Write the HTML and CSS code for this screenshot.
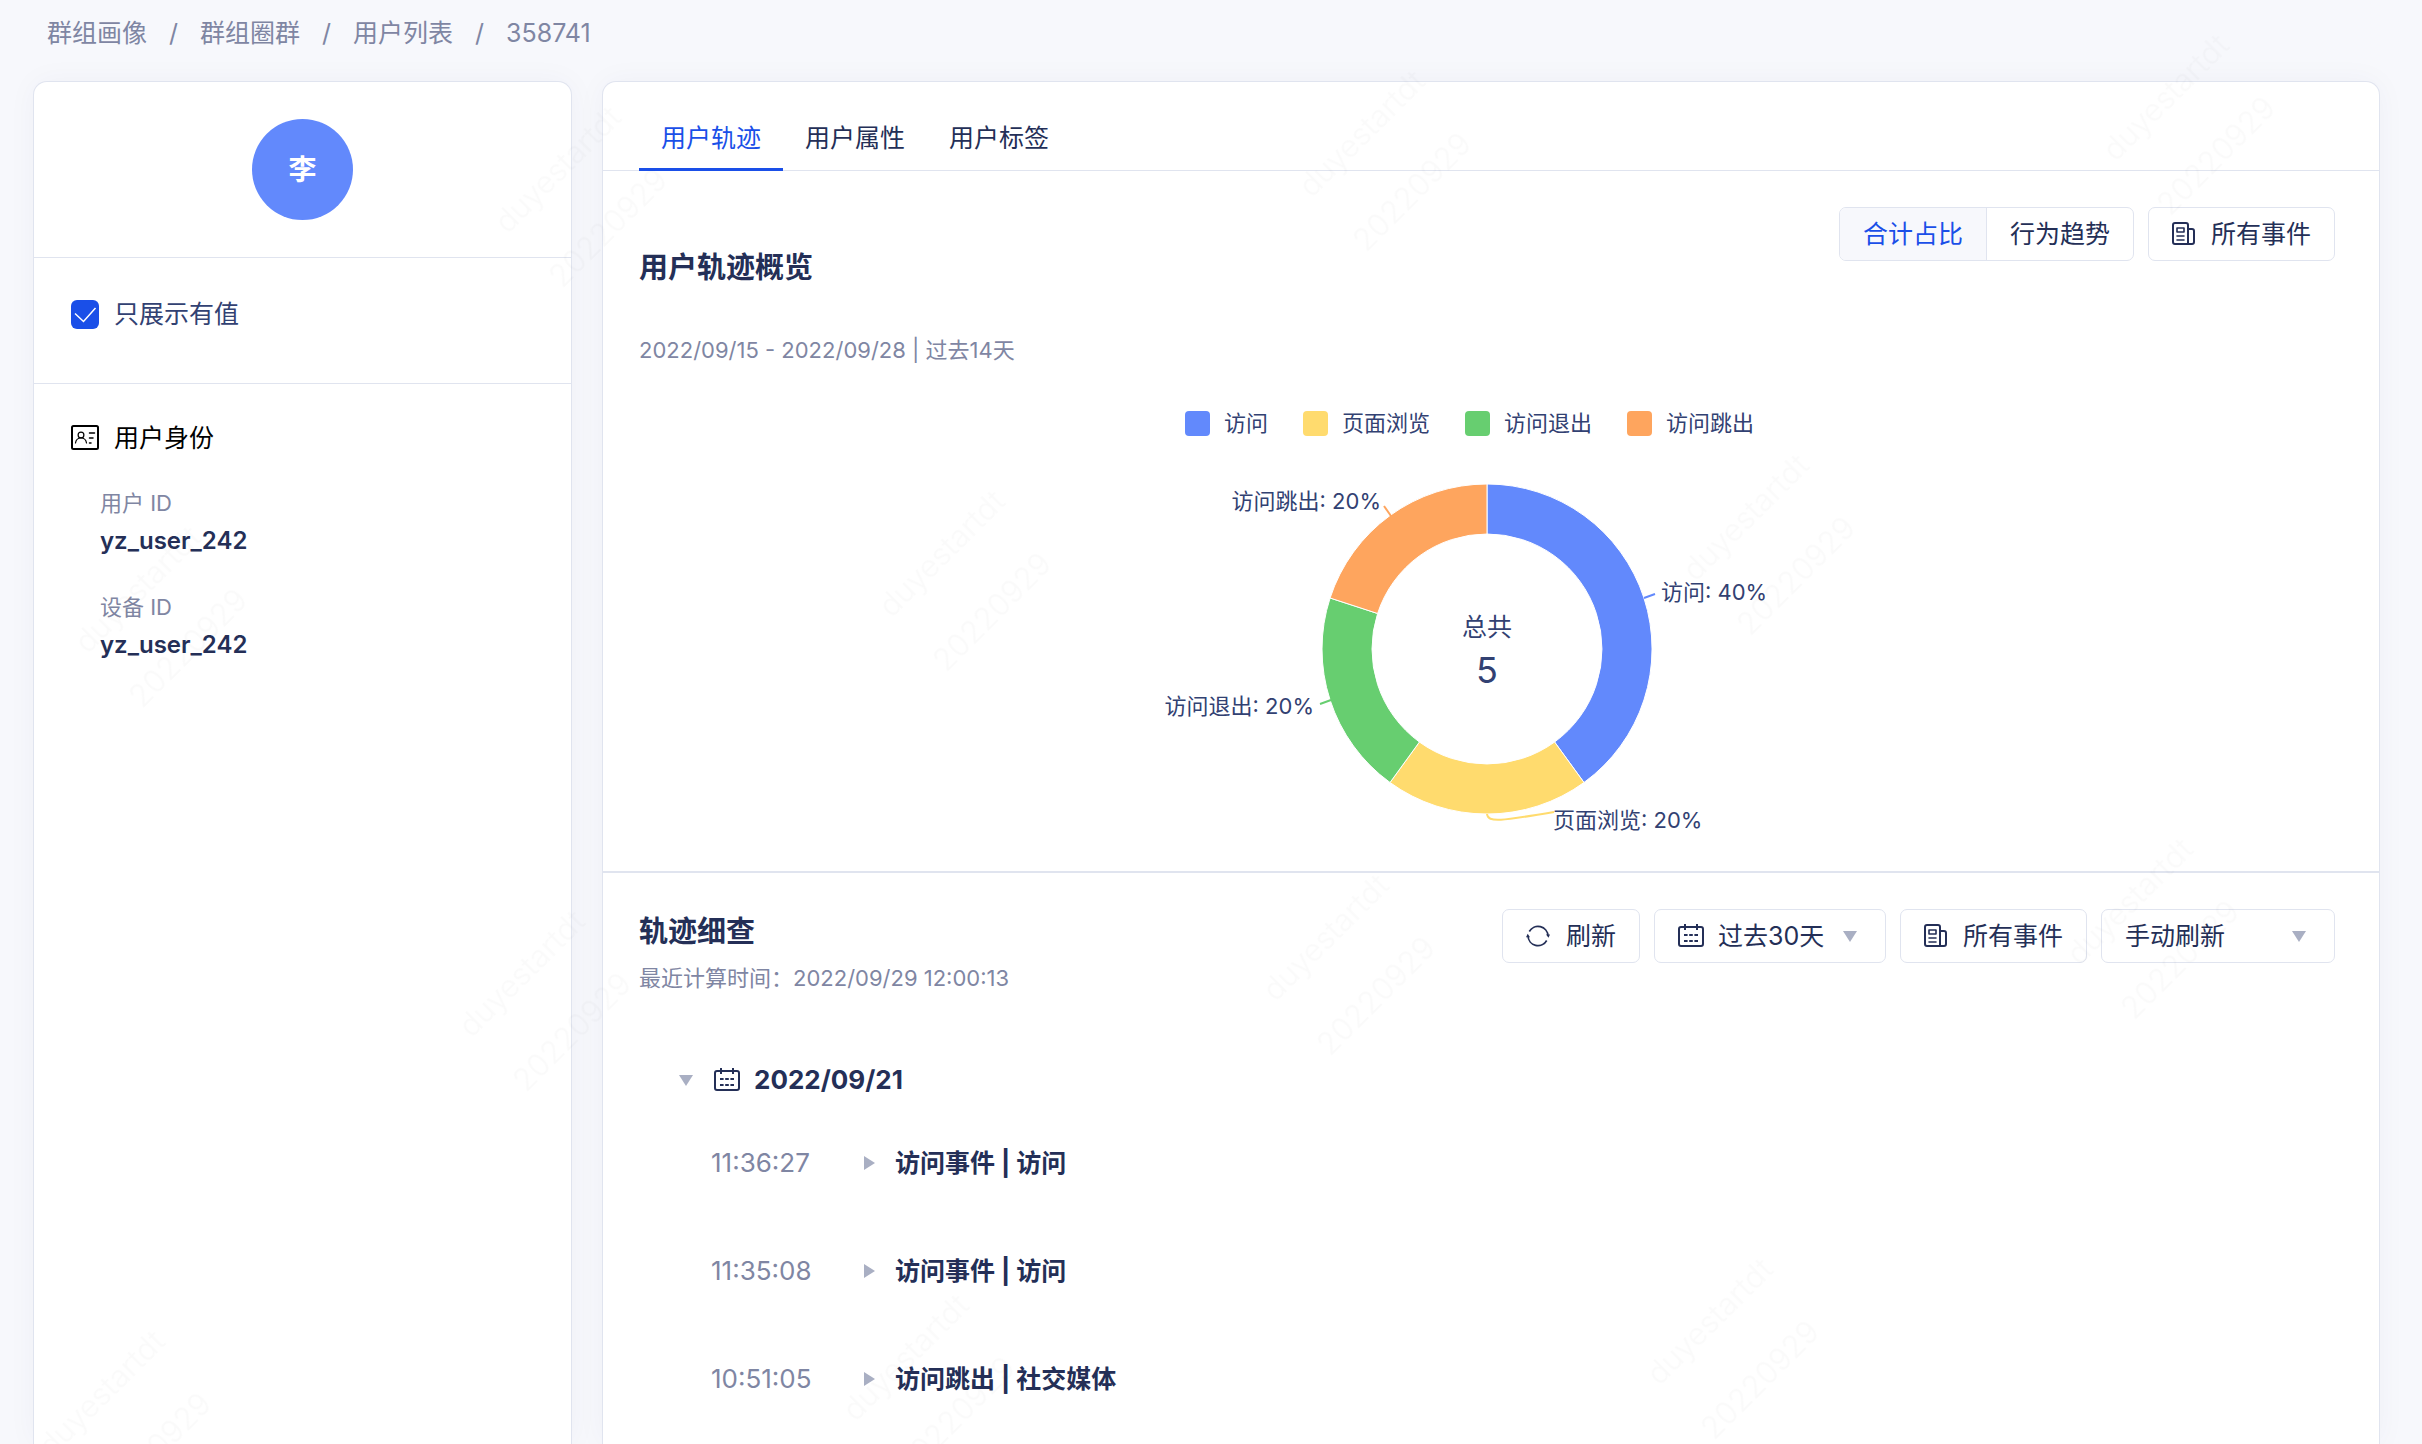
FILE: index.html
```html
<!DOCTYPE html>
<html lang="zh-CN">
<head>
<meta charset="utf-8">
<meta name="viewport" content="width=device-width, initial-scale=1">
<title>用户列表 - 358741</title>
<link rel="stylesheet" href="styles.css">
</head>
<body>
<svg class="sprite" aria-hidden="true">
  <symbol id="icon-doc" viewBox="0 0 23 24">
    <g fill="none" stroke="currentColor" stroke-width="2" stroke-linejoin="round" stroke-linecap="round">
      <path d="M16 22H3a2 2 0 0 1-2-2V3a2 2 0 0 1 2-2h11a2 2 0 0 1 2 2v19"/>
      <path d="M16 7h4a2 2 0 0 1 2 2v11a2 2 0 0 1-2 2h-4"/>
      <path d="M5 6h7v4H5zM5 14h7M5 18h7" stroke-width="1.6"/>
    </g>
  </symbol>
  <symbol id="icon-calendar" viewBox="0 0 26 24">
    <g fill="none" stroke="currentColor" stroke-width="2">
      <rect x="1" y="3" width="24" height="19" rx="2"/>
      <path d="M7 0v6M19 0v6"/>
      <path d="M6 11h3.600M11.200 11h3.600M16.400 11H20M6 17h3.600M11.200 17h3.600M16.400 17H20"/>
    </g>
  </symbol>
  <symbol id="icon-refresh" viewBox="0 0 24 24">
    <g fill="none" stroke="currentColor" stroke-width="1.700">
      <path d="M3.300 7.500A10 10 0 0 1 22 12"/>
      <path d="M20.700 16.500A10 10 0 0 1 2 12"/>
    </g>
    <path fill="currentColor" d="M20 10.500h4L22.500 13.800zM0 13.300h4L1.700 9.800z"/>
  </symbol>
  <symbol id="icon-idcard" viewBox="0 0 28 26">
    <g fill="none" stroke="currentColor" stroke-linecap="round">
      <rect x="1" y="1" width="26" height="23" rx="1.500" stroke-width="2"/>
      <circle cx="10" cy="10" r="2.900" stroke-width="1.200"/>
      <path d="M4.500 18c.5-3.500 2.500-5 5.500-5s5 1.500 5.500 5" stroke-width="1.200"/>
      <path d="M18.500 8h5M18.500 13h3.500M18.500 18h1.500" stroke-width="1.500"/>
    </g>
  </symbol>
  <symbol id="icon-down" viewBox="0 0 14 12"><path fill="currentColor" d="M0 1h14L7 12z"/></symbol>
  <symbol id="icon-right" viewBox="0 0 12 14"><path fill="currentColor" d="M1 0l11 7-11 7z"/></symbol>
</svg>

<div class="page">
  <nav class="breadcrumb" aria-label="面包屑">
    <a href="#">群组画像</a><span class="slash">/</span>
    <a href="#">群组圈群</a><span class="slash">/</span>
    <a href="#">用户列表</a><span class="slash">/</span>
    <span>358741</span>
  </nav>

  <main class="columns">
    <aside class="card profile">
      <div class="profile-head"><div class="avatar">李</div></div>
      <div class="profile-filter">
        <label class="check"><input type="checkbox" checked><span>只展示有值</span></label>
      </div>
      <section class="identity">
        <h2 class="identity-title"><svg class="i-idcard"><use href="#icon-idcard"/></svg>用户身份</h2>
        <dl class="fields">
          <div><dt>用户 ID</dt><dd>yz_user_242</dd></div>
          <div><dt>设备 ID</dt><dd>yz_user_242</dd></div>
        </dl>
      </section>
    </aside>

    <div class="card content">
      <div class="tabs" role="tablist">
        <button class="tab active" role="tab" aria-selected="true">用户轨迹</button>
        <button class="tab" role="tab" aria-selected="false">用户属性</button>
        <button class="tab" role="tab" aria-selected="false">用户标签</button>
      </div>

      <section class="overview">
        <div class="section-head">
          <h2 class="title overview-title">用户轨迹概览</h2>
          <div class="tools">
            <div class="segmented">
              <button class="active">合计占比</button>
              <button>行为趋势</button>
            </div>
            <button class="btn"><svg class="i-doc"><use href="#icon-doc"/></svg>所有事件</button>
          </div>
        </div>
        <p class="note range">2022/09/15 - 2022/09/28 | 过去14天</p>
        <ul class="legend">
          <li class="visit">访问</li>
          <li class="view">页面浏览</li>
          <li class="exit">访问退出</li>
          <li class="bounce">访问跳出</li>
        </ul>
        <svg class="donut" viewBox="-31 0 700 392" role="img" aria-label="用户轨迹占比">
          <g stroke="#fff" stroke-width="1">
            <path fill="#6289fc" d="M319 24A165 165 0 0 1 416 322.500L386.600 282A115 115 0 0 0 319 74z"/>
            <path fill="#ffdb6e" d="M416 322.500A165 165 0 0 1 222 322.500L251.400 282A115 115 0 0 0 386.600 282z"/>
            <path fill="#67ce70" d="M222 322.500A165 165 0 0 1 162.100 138L209.600 153.500A115 115 0 0 0 251.400 282z"/>
            <path fill="#fea55e" d="M162.100 138A165 165 0 0 1 319 24V74A115 115 0 0 0 209.600 153.500z"/>
          </g>
          <g fill="none" stroke-width="2">
            <path stroke="#6289fc" d="M476 138l11-4"/>
            <path stroke="#ffdb6e" d="M319 354c1 9 14 7 67-2"/>
            <path stroke="#67ce70" d="M163 240l-11 4"/>
            <path stroke="#fea55e" d="M223 56l-7-10"/>
          </g>
          <g class="donut-label">
            <text x="493" y="140">访问: 40%</text>
            <text x="385" y="368">页面浏览: 20%</text>
            <text x="146" y="254" text-anchor="end">访问退出: 20%</text>
            <text x="213" y="49" text-anchor="end">访问跳出: 20%</text>
          </g>
          <g class="donut-total" text-anchor="middle">
            <text x="319" y="176">总共</text>
            <text class="donut-value" x="319" y="223">5</text>
          </g>
        </svg>
      </section>

      <section class="detail">
        <div class="section-head">
          <div>
            <h2 class="title detail-title">轨迹细查</h2>
            <p class="note computed">最近计算时间：2022/09/29 12:00:13</p>
          </div>
          <div class="tools">
            <button class="btn"><svg class="i-refresh"><use href="#icon-refresh"/></svg>刷新</button>
            <div class="select period">
              <svg class="i-calendar"><use href="#icon-calendar"/></svg>
              <select aria-label="时间范围"><option>过去30天</option></select>
              <svg class="i-down"><use href="#icon-down"/></svg>
            </div>
            <button class="btn"><svg class="i-doc"><use href="#icon-doc"/></svg>所有事件</button>
            <div class="select mode">
              <select aria-label="刷新方式"><option>手动刷新</option></select>
              <svg class="i-down"><use href="#icon-down"/></svg>
            </div>
          </div>
        </div>

        <div class="day">
          <h3 class="day-head">
            <svg class="i-down"><use href="#icon-down"/></svg>
            <svg class="i-calendar"><use href="#icon-calendar"/></svg>
            <span>2022/09/21</span>
          </h3>
          <ul class="events">
            <li><time>11:36:27</time><svg class="i-right"><use href="#icon-right"/></svg><b>访问事件 | 访问</b></li>
            <li><time>11:35:08</time><svg class="i-right"><use href="#icon-right"/></svg><b>访问事件 | 访问</b></li>
            <li><time>10:51:05</time><svg class="i-right"><use href="#icon-right"/></svg><b>访问跳出 | 社交媒体</b></li>
          </ul>
        </div>
      </section>
    </div>
  </main>
</div>

<svg class="watermark" aria-hidden="true">
  <defs>
    <pattern id="mark" y="80" width="594" height="543" patternUnits="userSpaceOnUse" patternTransform="rotate(-45)">
      <text x="193" y="445">duyestartdt</text>
      <text x="193" y="522">20220929</text>
    </pattern>
  </defs>
  <rect width="100%" height="100%" fill="url(#mark)"/>
</svg>
</body>
</html>
```
FILE: styles.css
```css
:root {
  --ink: #242f57;
  --ink-soft: #324172;
  --muted: #7f86a3;
  --primary: #1a4fe8;
  --line: #e0e4ef;
  --caret: #a9afc3;
}

* { box-sizing: border-box; }

body {
  margin: 0;
  background: #f7f8fc;
  color: var(--ink);
  font: 25px/36px Inter, "Noto Sans CJK SC", sans-serif;
}

h2, h3, p, ul, dl, dd { margin: 0; padding: 0; font-weight: 400; font-size: 25px; }
ul { list-style: none; }
a { color: inherit; text-decoration: none; }
button, select { font: inherit; color: inherit; background: none; border: 0; padding: 0; cursor: pointer; }
svg { flex: none; }

.sprite { position: absolute; width: 0; height: 0; }
.i-doc { width: 23px; height: 24px; }
.i-calendar { width: 26px; height: 24px; }
.i-refresh { width: 24px; height: 24px; }
.i-idcard { width: 28px; height: 26px; }
.i-down { width: 14px; height: 12px; color: var(--caret); }
.i-right { width: 12px; height: 14px; color: var(--caret); }

.page { display: flex; flex-direction: column; min-height: 100vh; padding: 0 42px 0 33px; }

.breadcrumb { display: flex; padding: 15px 14px 30px; color: var(--muted); }
.slash { width: 53px; text-align: center; }

.columns { flex: 1; display: flex; gap: 30px; }
.card {
  background: #fff;
  border: 1px solid var(--line);
  border-bottom: 0;
  border-radius: 14px 14px 0 0;
  box-shadow: 0 0 30px rgba(40, 60, 110, .04);
}

.profile { flex: 0 0 539px; }
.profile-head { display: flex; justify-content: center; padding: 37px; border-bottom: 1px solid var(--line); }
.avatar {
  width: 101px; height: 101px; border-radius: 50%;
  background: #6289fc; color: #fff;
  font-size: 28px; font-weight: 700; line-height: 102px; text-align: center;
}
.profile-filter { padding: 38px 37px 51px; border-bottom: 1px solid var(--line); }
.check { display: flex; align-items: center; gap: 15px; color: var(--ink-soft); }
.check input {
  appearance: none; width: 28px; height: 29px; margin: 0; border-radius: 6px;
  background: var(--primary) url("data:image/svg+xml,%3Csvg xmlns='http://www.w3.org/2000/svg' viewBox='0 0 28 29'%3E%3Cpath d='M4 13.500l8.500 8L24.500 8' fill='none' stroke='white' stroke-width='1.500'/%3E%3C/svg%3E") center / 100%;
}
.identity { padding: 36px 37px; }
.identity-title { display: flex; align-items: center; gap: 15px; color: #000; }
.fields { display: grid; gap: 32px; padding: 31px 0 0 29px; }
.fields dt { font-size: 22px; line-height: 32px; color: var(--muted); margin-bottom: 4px; }
.fields dd { font-size: 24px; font-weight: 600; }

.content { flex: 1; min-width: 0; }
.tabs { display: flex; padding-left: 36px; border-bottom: 1px solid var(--line); }
.tab { padding: 38px 22px 12px; margin-bottom: -1px; border-bottom: 3px solid transparent; }
.tab.active { color: var(--primary); border-color: var(--primary); }

.overview { padding: 36px 44px 19px 36px; border-bottom: 2px solid var(--line); }
.section-head { display: flex; justify-content: space-between; align-items: flex-start; }
.title { font-size: 29px; font-weight: 600; }
.overview-title { margin-top: 43px; }
.note { font-size: 22px; line-height: 32px; color: var(--muted); }
.range { margin-top: 48px; }

.tools { display: flex; gap: 14px; }
.btn, .select, .segmented { display: flex; align-items: center; height: 54px; border: 1px solid var(--line); border-radius: 7px; }
.btn { gap: 16px; padding: 0 23px; }
.segmented { overflow: hidden; }
.segmented button { height: 52px; padding: 0 23px; }
.segmented .active { background: #f7f8fc; color: var(--primary); border-right: 1px solid var(--line); }

.legend { display: flex; justify-content: center; margin-top: 41px; font-size: 22px; line-height: 32px; color: var(--ink-soft); }
.legend li { display: flex; align-items: center; gap: 14px; margin-right: 35px; font-size: 22px; }
.legend li::before { content: ""; width: 25px; height: 25px; border-radius: 4px; }
.visit::before { background: #6289fc; }
.view::before { background: #ffdb6e; }
.exit::before { background: #67ce70; }
.bounce::before { background: #fea55e; }

.donut { display: block; width: 700px; height: 392px; margin: 21px auto 0; }
.donut-label { font-size: 22px; fill: var(--ink-soft); }
.donut-total { fill: var(--ink-soft); }
.donut-value { font-size: 36px; }

.detail { padding: 36px 44px 0 36px; }
.detail-title { margin-top: 5px; }
.computed { margin-top: 12px; }
.select select { appearance: none; flex: 1; outline: 0; }
.select { padding: 0 28px 0 23px; }
.period { width: 232px; gap: 14px; }
.mode { width: 234px; }

.day { padding: 68px 0 0 40px; }
.day-head { display: flex; align-items: center; font-size: 26px; font-weight: 700; }
.day-head .i-calendar { margin: 0 14px 0 21px; }
.events { padding: 11px 0 0 32px; }
.events li { display: flex; align-items: center; height: 108px; }
.events time { width: 152px; font-size: 26px; color: var(--muted); }
.events b { margin-left: 20px; font-weight: 700; }

.watermark { position: fixed; inset: 0; width: 100%; height: 100%; pointer-events: none; }
.watermark text { font-size: 31px; font-weight: 300; fill: rgba(0, 0, 0, .02); }
```
